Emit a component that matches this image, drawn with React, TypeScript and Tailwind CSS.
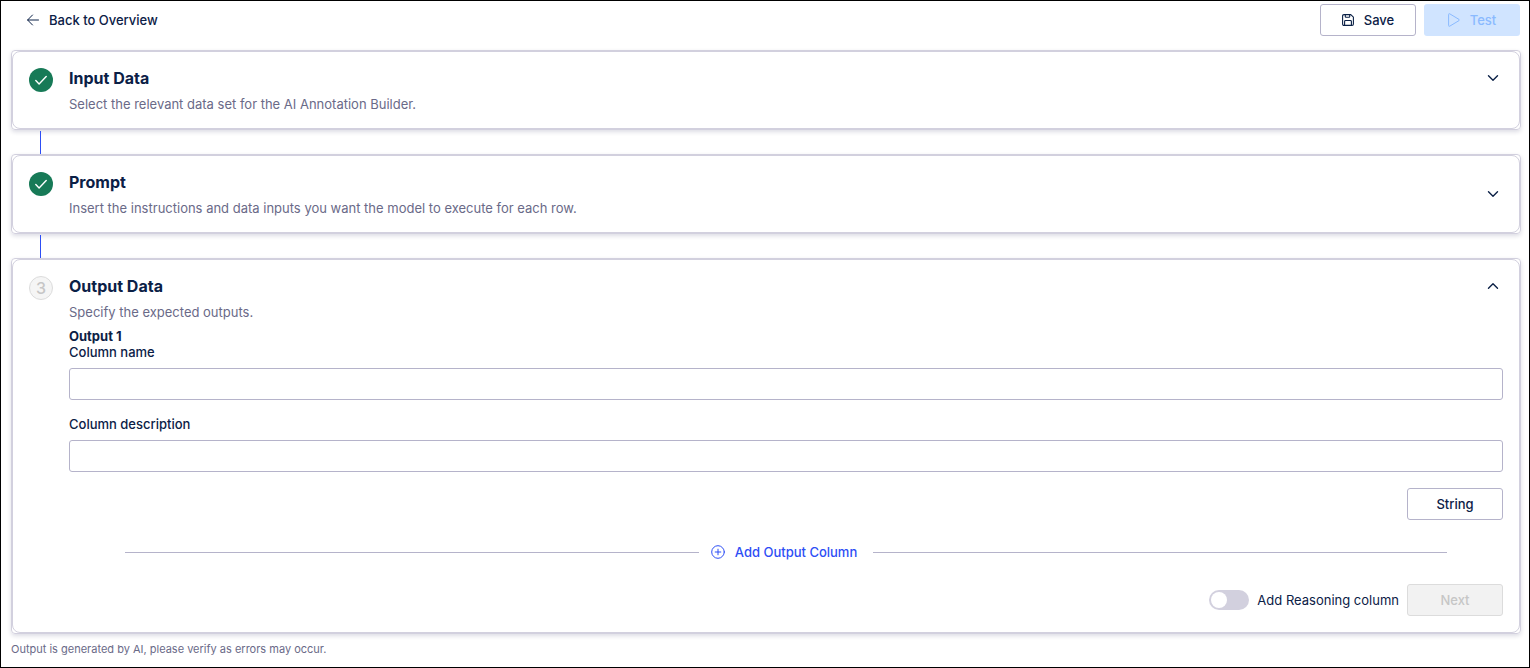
import React, { useState } from 'react';

interface StepCardProps {
  step: number;
  title: string;
  description: string;
  done?: boolean;
  open: boolean;
  onToggle: () => void;
  centerToggle?: boolean;
  children?: React.ReactNode;
}

const Chevron: React.FC<{ up?: boolean }> = ({ up }) => (
  <svg width="12" height="12" viewBox="0 0 12 12" fill="none" stroke="currentColor" strokeWidth="1.4" strokeLinecap="round" strokeLinejoin="round">
    <path d={up ? 'M1.5 8.2 6 3.8l4.5 4.4' : 'M1.5 3.8 6 8.2l4.5-4.4'} />
  </svg>
);

const ArrowLeftIcon = () => (
  <svg width="12" height="12" viewBox="0 0 12 12" fill="none" stroke="currentColor" strokeWidth="1" strokeLinecap="round" strokeLinejoin="round">
    <path d="M11.5 6H.7M5.5 1 .6 6l4.9 5" />
  </svg>
);

const SaveIcon = () => (
  <svg width="12" height="12" viewBox="0 0 12 12" fill="none" stroke="currentColor" strokeWidth="1.1" strokeLinejoin="round">
    <path d="M.6 2Q.6.6 2 .6h6.8l2.600 2.500V10q0 1.400-1.400 1.400H2Q.6 11.400.6 10z" />
    <path d="M3.300.7v2q0 .6.6.6h3.200q.6 0 .6-.6v-2M2.600 11.300V7.400q0-.9.9-.9h5q.9 0 .9.9v3.900" />
  </svg>
);

const PlayIcon = () => (
  <svg width="12" height="14" viewBox="0 0 12 14" fill="none" stroke="currentColor" strokeWidth="1" strokeLinejoin="round">
    <path d="M.6 1.600q0-1.300 1.100-.8l9.300 5.600q.8.600 0 1.200l-9.300 5.600Q.6 13.700.6 12.400z" />
  </svg>
);

const AddCircleIcon = () => (
  <svg width="14" height="14" viewBox="0 0 14 14" fill="none" stroke="currentColor" strokeWidth="1" strokeLinecap="round">
    <circle cx="7" cy="7" r="6.3" />
    <path d="M7 4.2v5.6M4.2 7h5.6" />
  </svg>
);

const StepBadge: React.FC<{ step: number; done?: boolean }> = ({ step, done }) =>
  done ? (
    <div className="flex h-6 w-6 shrink-0 items-center justify-center rounded-full bg-[#177a57] text-white">
      <svg width="12" height="12" viewBox="0 0 12 12" fill="none" stroke="currentColor" strokeWidth="1.4" strokeLinecap="round" strokeLinejoin="round">
        <path d="m.8 6.600 3.300 3.300 7.100-7.300" />
      </svg>
    </div>
  ) : (
    <div className="flex h-6 w-6 shrink-0 items-center justify-center rounded-full border border-[#dcdcdc] bg-[#f5f5f5] text-base leading-5 font-medium text-[#c6c6c6]">
      {step}
    </div>
  );

const StepCard: React.FC<StepCardProps> = ({ step, title, description, done, open, onToggle, centerToggle, children }) => (
  <section className="rounded border border-[#d2d0de] shadow-[0_2px_4px_rgba(40,40,90,0.16)]">
    <div className="flex gap-4 rounded-lg border border-[#d2d0de] p-4">
      <StepBadge step={step} done={done} />
      <div className="min-w-0 flex-1">
        <div className="flex justify-between">
          <div>
            <h2 className="text-base leading-5 font-bold">{title}</h2>
            <p className="mt-2 text-[13px] leading-4 text-[#6a6a88]">{description}</p>
          </div>
          <button
            type="button"
            onClick={onToggle}
            aria-expanded={open}
            aria-label={`Toggle ${title}`}
            className={`flex h-5 w-5 items-center justify-center ${centerToggle ? 'self-center' : ''}`}
          >
            <Chevron up={open} />
          </button>
        </div>
        {open && children}
      </div>
    </div>
  </section>
);

const Connector = () => (
  <div className="flex h-6 pt-px pl-[29px]">
    <div className="w-px bg-[#2d4ef5]" />
  </div>
);

const TextField: React.FC<{ id: string; label: string }> = ({ id, label }) => (
  <div>
    <label htmlFor={id} className="block leading-4 font-medium">
      {label}
    </label>
    <input id={id} type="text" className="mt-2 block h-8 w-full rounded-[3px] border border-[#b5b3ca] bg-white px-3" />
  </div>
);

export default function App() {
  const [openSteps, setOpenSteps] = useState<number[]>([3]);
  const [reasoning, setReasoning] = useState(false);

  const toggleStep = (step: number) => {
    setOpenSteps((prev) => (prev.includes(step) ? prev.filter((s) => s !== step) : [...prev, step]));
  };

  return (
    <div className="min-h-screen border border-black bg-white pt-[3px] pr-2 pb-2 pl-[10px] font-['Inter',sans-serif] text-[13px] leading-4 text-[#0b2046]">
      <header className="flex items-center justify-between pr-px">
        <a href="#overview" className="ml-4 flex items-center gap-[10px] font-medium">
          <ArrowLeftIcon />
          Back to Overview
        </a>
        <div className="flex gap-2">
          <button type="button" className="flex h-8 w-24 items-center justify-center gap-[10px] rounded-[3px] border border-[#b5b3ca] font-medium">
            <SaveIcon />
            Save
          </button>
          <button type="button" disabled className="flex h-8 w-24 items-center justify-center gap-[10px] rounded-[3px] bg-[#d0e4ff] font-medium text-[#8abaff]">
            <PlayIcon />
            Test
          </button>
        </div>
      </header>

      <main className="mt-[14px]">
        <StepCard
          step={1}
          title="Input Data"
          description="Select the relevant data set for the AI Annotation Builder."
          done
          open={openSteps.includes(1)}
          onToggle={() => toggleStep(1)}
        />
        <Connector />
        <StepCard
          step={2}
          title="Prompt"
          description="Insert the instructions and data inputs you want the model to execute for each row."
          done
          centerToggle
          open={openSteps.includes(2)}
          onToggle={() => toggleStep(2)}
        />
        <Connector />
        <StepCard
          step={3}
          title="Output Data"
          description="Specify the expected outputs."
          open={openSteps.includes(3)}
          onToggle={() => toggleStep(3)}
        >
          <h3 className="mt-2 leading-4 font-bold">Output 1</h3>
          <div className="flex flex-col gap-4">
            <TextField id="column-name" label="Column name" />
            <TextField id="column-description" label="Column description" />
            <button type="button" className="h-8 w-24 self-end rounded-[3px] border border-[#b5b3ca] font-medium">
              String
            </button>
            <div className="flex items-center px-14">
              <div className="h-px flex-1 bg-[#b5b3ca]" />
              <button type="button" className="flex h-8 items-center gap-[10px] pr-4 pl-3 font-medium text-[#2d4ef5]">
                <AddCircleIcon />
                Add Output Column
              </button>
              <div className="h-px flex-1 bg-[#b5b3ca]" />
            </div>
            <div className="flex items-center justify-end gap-2">
              <label htmlFor="reasoning" className="flex items-center gap-2">
                <input
                  id="reasoning"
                  type="checkbox"
                  role="switch"
                  checked={reasoning}
                  onChange={(e) => setReasoning(e.target.checked)}
                  className="flex h-5 w-10 appearance-none items-center rounded-full bg-[#d2d0de] px-[2px] before:h-4 before:w-4 before:rounded-full before:bg-white checked:justify-end checked:bg-[#2d4ef5]"
                />
                Add Reasoning column
              </label>
              <button type="button" disabled className="h-8 w-24 rounded-[3px] border border-[#dcdcdc] bg-[#f2f2f2] font-medium text-[#c6c6c6]">
                Next
              </button>
            </div>
          </div>
        </StepCard>
      </main>

      <footer className="mt-2 text-[11px] leading-[14px] text-[#6a6a88]">
        Output is generated by AI, please verify as errors may occur.
      </footer>
    </div>
  );
}
